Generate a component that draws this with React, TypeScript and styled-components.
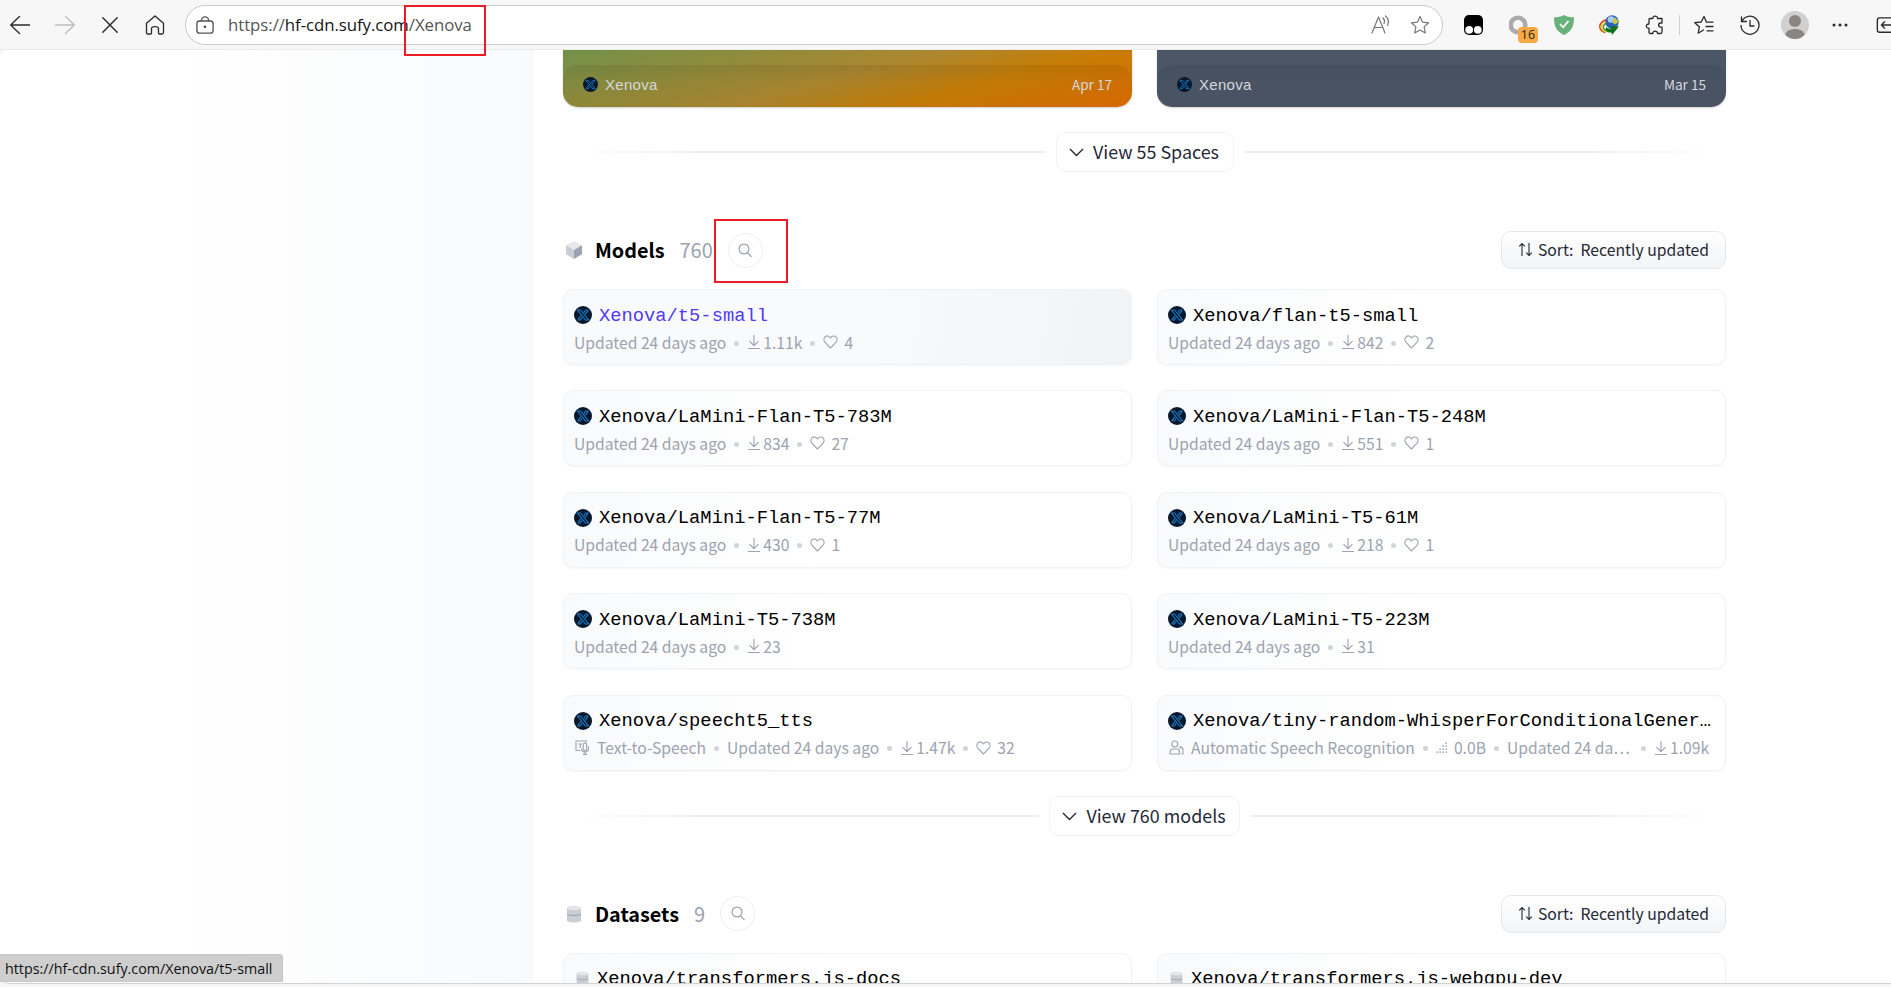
import React from 'react';
import styled, { createGlobalStyle } from 'styled-components';

const sans = '"Noto Sans CJK SC", "Noto Sans", sans-serif';
const mono = '"Liberation Mono", monospace';
const ui = '"Open Sans", "Noto Sans", sans-serif';

const Global = createGlobalStyle`
  * { box-sizing: border-box; }
  body { margin: 0; background: #f7f7f7; overflow: hidden; }
  svg { display: block; flex: none; }
`;

const Window = styled.div`
  position: relative;
  width: 1891px;
  height: 987px;
  overflow: hidden;
  display: flex;
  flex-direction: column;
  background: #f7f7f7;
  font-family: ${sans};
`;

const Toolbar = styled.header`
  height: 50px;
  flex: none;
  display: flex;
  align-items: center;
  padding-left: 8px;
  border-bottom: 1px solid #ebebeb;
`;

const Slot = styled.span<{ $w: number }>`
  width: ${p => p.$w}px;
  flex: none;
  height: 48px;
  display: flex;
  align-items: center;
  justify-content: center;
`;

const Address = styled.div`
  width: 1258px;
  height: 40px;
  flex: none;
  border: 1px solid #cbcbcb;
  border-radius: 20px;
  background: #fff;
  display: flex;
  align-items: center;
  padding: 0 5px 0 10px;
  font: 16.8px ${ui};
  color: #555;
  b { font-weight: 400; color: #151515; }
`;

const Url = styled.span`
  flex: 1;
  padding-left: 14px;
  letter-spacing: -0.05px;
  white-space: nowrap;
`;

const Divider = styled.span`
  width: 1px;
  height: 20px;
  margin: 0 9px;
  background: #cfcfcf;
  flex: none;
`;

const Viewport = styled.main`
  height: 933px;
  flex: none;
  display: flex;
  overflow: hidden;
  background: #fff;
  border-radius: 9px 0 0 9px;
  box-shadow: 0 1px 1px #cfcfcf;
`;

const Sidebar = styled.aside`
  width: 533px;
  flex: none;
  border-right: 1px solid #f5f6f8;
  background: linear-gradient(to right, #fff 30%, #f9fafc);
`;

const Content = styled.section`
  width: 1163px;
  margin-left: 30px;
  flex: none;
`;

const Grid = styled.div`
  display: grid;
  grid-template-columns: 569px 569px;
  gap: 25.4px 25px;
`;

const SpaceCard = styled.div<{ $bg: string }>`
  height: 57px;
  border-radius: 0 0 15px 15px;
  background: ${p => p.$bg};
  box-shadow: 0 1px 2px #0003;
  padding-top: 15px;
`;

const SpaceFooter = styled.div`
  height: 42px;
  border-radius: 15px;
  background: linear-gradient(#00000014, #00000008 40%);
  display: flex;
  align-items: center;
  padding: 0 20px 3px;
  color: #d5d8dc;
`;

const Owner = styled.span`
  flex: 1;
  margin-left: 7px;
  font: 15px "Liberation Sans", sans-serif;
  letter-spacing: 0.3px;
`;

const SpaceDate = styled.span`
  font-size: 13.6px;
  padding-bottom: 2px;
`;

const More = styled.div`
  display: flex;
  align-items: center;
  gap: 10px;
  height: 40px;
  padding: 0 15px;
`;

const Rule = styled.span<{ $dir: string }>`
  flex: 1;
  height: 2px;
  background: linear-gradient(to ${p => p.$dir}, #eeeff1 75%, #fff);
`;

const MoreButton = styled.button<{ $w: number }>`
  width: ${p => p.$w}px;
  height: 40px;
  border: 1px solid #f2f3f5;
  border-radius: 10px;
  background: #fff;
  display: flex;
  align-items: center;
  justify-content: center;
  gap: 9px;
  padding: 0 1px 2px 0;
  font: 17.9px ${sans};
  color: #1f2937;
  white-space: nowrap;
  svg { margin-top: 3px; }
`;

const Heading = styled.div`
  display: flex;
  align-items: center;
  height: 38px;
`;

const Title = styled.h3`
  margin: 0 0 0 12px;
  padding-bottom: 1px;
  font-size: 19.8px;
  font-weight: 600;
  color: #000;
`;

const Count = styled.span`
  margin-left: 15px;
  padding-bottom: 1px;
  font-size: 20px;
  color: #9ca3af;
`;

const SearchButton = styled.span`
  width: 35px;
  height: 35px;
  margin-left: 15px;
  border: 1px solid #eceef0;
  border-radius: 50%;
  display: grid;
  place-items: center;
`;

const SortButton = styled.button`
  width: 225px;
  height: 38px;
  margin-left: auto;
  border: 1px solid #e5e7eb;
  border-radius: 10px;
  background: linear-gradient(#fff, #f3f4f6);
  display: flex;
  align-items: center;
  justify-content: center;
  padding: 0 0 1px;
  font: 15.75px ${sans};
  color: #1f2937;
  white-space: nowrap;
  span { margin: 0 7px 0 5px; }
`;

const Card = styled.article<{ $hover?: boolean }>`
  height: 76px;
  border: 1px solid #f1f2f4;
  border-radius: 10px;
  box-shadow: 0 1px 2px #0000000a;
  background: ${p => p.$hover
    ? 'linear-gradient(100deg, #f9fafc 50%, #f2f3f5)'
    : 'linear-gradient(100deg, #f9fafc, #fff 45%)'};
  padding: 13px 0 0 10px;
`;

const Name = styled.h4<{ $hover?: boolean }>`
  display: flex;
  align-items: center;
  height: 25px;
  margin: 0;
  font: 18.77px ${mono};
  color: ${p => (p.$hover ? '#4f39f6' : '#000')};
  white-space: nowrap;
  svg { margin-bottom: 1px; }
`;

const NameText = styled.span`
  margin-left: 7px;
`;

const Meta = styled.div`
  display: flex;
  align-items: center;
  height: 22px;
  margin-top: 3px;
  font-size: 15.68px;
  color: #9ca3af;
  white-space: nowrap;
`;

const Dot = styled.i<{ $gap: number }>`
  width: 5px;
  height: 5px;
  border-radius: 50%;
  margin: 2px ${p => p.$gap}px 0;
  background: #d1d5db;
  flex: none;
`;

const Gap = styled.span<{ $w: number }>`
  width: ${p => p.$w}px;
  flex: none;
`;

const Spacer = styled.div<{ $h: number }>`
  height: ${p => p.$h}px;
`;

const Status = styled.div`
  position: absolute;
  left: 0;
  top: 954px;
  width: 283px;
  height: 28px;
  background: #cecece;
  border: 1px solid #c6c6c6;
  border-left: 0;
  border-radius: 0 4px 0 0;
  padding-left: 5px;
  font: 14.3px/28px ${ui};
  color: #111;
  white-space: nowrap;
`;

const Marker = styled.div<{ $x: number; $y: number; $w: number; $h: number }>`
  position: absolute;
  left: ${p => p.$x}px;
  top: ${p => p.$y}px;
  width: ${p => p.$w}px;
  height: ${p => p.$h}px;
  border: 2px solid #ed1c24;
`;

const Badge = styled.span`
  position: absolute;
  left: 13px;
  top: 26px;
  width: 20px;
  height: 16px;
  border-radius: 4px;
  background: #f7a944;
  font: 12.5px/16px ${ui};
  color: #222;
  text-align: center;
`;

const BadgeHost = styled(Slot)`
  position: relative;
`;

type IconProps = { size?: number; w?: number; color?: string; children: React.ReactNode };
const Icon = ({ size = 20, w = 1.3, color = '#2a2a2a', children }: IconProps) => (
  <svg width={size} height={size} viewBox="0 0 20 20" fill="none" stroke={color} strokeWidth={w} strokeLinecap="round" strokeLinejoin="round">
    {children}
  </svg>
);

const Avatar = ({ size = 18 }: { size?: number }) => (
  <svg width={size} height={size} viewBox="0 0 18 18">
    <circle cx="9" cy="9" r="9" fill="#06182e" />
    <g fill="none" stroke="#1a7cc2" strokeWidth="1.1">
      <path d="M3.500 4h3l8 10h-3z" />
      <path d="M14.500 4h-2.700L9.800 6.700M3.500 14h2.700l2-2.700M11 8.300l3-3.700M7 9.700l-3 3.700" />
    </g>
  </svg>
);

const Download = () => (
  <svg width="14" height="16" viewBox="0 0 14 16" fill="none" stroke="#9ca3af" strokeWidth="1.1">
    <path d="M7 1v10.500M2.500 7.200 7 11.700l4.500-4.500M1 14.500h12" />
  </svg>
);

const Heart = () => (
  <svg width="15" height="14" viewBox="0 0 15 14" fill="none" stroke="#9ca3af" strokeWidth="1.1">
    <path d="M7.500 13 1.900 7.100C.5 5.600.6 3.200 2 1.900c1.400-1.300 3.500-1.200 4.800.2l.7.8.7-.8C9.500.7 11.600.6 13 1.900c1.400 1.300 1.500 3.700.1 5.200z" />
  </svg>
);

const Chevron = () => (
  <svg width="15" height="9" viewBox="0 0 15 9" fill="none" stroke="#1f2937" strokeWidth="1.4">
    <path d="m1 1 6.500 6.500L14 1" />
  </svg>
);

const Speech = () => (
  <svg width="15" height="15" viewBox="0 0 15 15" fill="none" stroke="#9ca3af" strokeWidth="1.1">
    <path d="M5.500 10.500H1V1h10.500v1.200M3.300 4h4M5.300 4v4M8.300 4.800a1.700 1.700 0 0 1 3.400 0v4a1.700 1.700 0 0 1-3.400 0zM6.500 8.500c0 4.500 7 4.500 7 0V6.500M10 12v2.500M8 14.400h4" />
  </svg>
);

const Person = () => (
  <svg width="15" height="15" viewBox="0 0 15 15" fill="none" stroke="#9ca3af" strokeWidth="1.1">
    <circle cx="5.800" cy="4" r="3" />
    <path d="M1 14v-2c0-2 1-3 3-3h3.500c2 0 3 1 3 3v2zM11 6.500c2 .5 3 2.200 3 4V14h-1.500M11 6.500v2.500" />
  </svg>
);

const Params = () => (
  <svg width="12" height="12" viewBox="0 0 12 12" fill="#9ca3af">
    {[[10, 1], [10, 4], [10, 7], [10, 10], [7, 4], [7, 7], [7, 10], [4, 7], [4, 10], [1, 10]].map(([x, y]) => (
      <rect key={`${x}-${y}`} x={x - 0.6} y={y - 0.6} width="1.5" height="1.5" />
    ))}
  </svg>
);

const Cube = () => (
  <svg width="18" height="20" viewBox="0 0 18 19">
    <path d="m9 .5 8 4.300L9 9.500 1 4.800z" fill="#e5e7eb" />
    <path d="m1 4.800 8 4.700v9l-8-4.700z" fill="#c9cdd4" />
    <path d="m17 4.800-8 4.700v9l8-4.700z" fill="#9ca3af" />
  </svg>
);

const Database = ({ s = 18 }: { s?: number }) => (
  <svg width={s} height={s} viewBox="0 0 18 18">
    <path d="M2 3v12.500C2 18.300 16 18.300 16 15.500V3z" fill="#c9cdd4" />
    <ellipse cx="9" cy="2.800" rx="7" ry="2.300" fill="#e5e7eb" />
    <path d="M2 9.200c2 1.700 12 1.700 14 0" fill="none" stroke="#9ca3af" />
  </svg>
);

const Magnifier = () => (
  <svg width="14" height="15" viewBox="0 0 14 15" fill="none" stroke="#9ca3af" strokeWidth="1.2">
    <circle cx="6" cy="6" r="4.900" />
    <path d="m9.500 9.800 4 4" />
  </svg>
);

const SortIcon = () => (
  <svg width="15" height="15" viewBox="0 0 15 15" fill="none" stroke="#1f2937" strokeWidth="1.1">
    <path d="M4 14V1.500M1.200 4.300 4 1.500l2.800 2.800M11 1v12.500M8.200 10.700l2.800 2.800 2.800-2.800" />
  </svg>
);

type Model = { name: string; downloads: string; likes?: string; task?: 'tts' | 'asr' };
const models: Model[] = [
  { name: 't5-small', downloads: '1.11k', likes: '4' },
  { name: 'flan-t5-small', downloads: '842', likes: '2' },
  { name: 'LaMini-Flan-T5-783M', downloads: '834', likes: '27' },
  { name: 'LaMini-Flan-T5-248M', downloads: '551', likes: '1' },
  { name: 'LaMini-Flan-T5-77M', downloads: '430', likes: '1' },
  { name: 'LaMini-T5-61M', downloads: '218', likes: '1' },
  { name: 'LaMini-T5-738M', downloads: '23' },
  { name: 'LaMini-T5-223M', downloads: '31' },
  { name: 'speecht5_tts', downloads: '1.47k', likes: '32', task: 'tts' },
  { name: 'tiny-random-WhisperForConditionalGener…', downloads: '1.09k', task: 'asr' },
];

const ModelCard = ({ m, hover }: { m: Model; hover?: boolean }) => (
  <Card $hover={hover}>
    <Name $hover={hover}><Avatar /><NameText>Xenova/{m.name}</NameText></Name>
    <Meta>
      {m.task === 'tts' && <><Gap $w={1} /><Speech /><Gap $w={7} />Text-to-Speech<Dot $gap={8} /></>}
      {m.task === 'asr' && <><Gap $w={1} /><Person /><Gap $w={7} />Automatic Speech Recognition<Dot $gap={8} /><Params /><Gap $w={6} />0.0B<Dot $gap={8} /></>}
      {m.task === 'asr' ? 'Updated 24 da…' : 'Updated 24 days ago'}
      {m.task === 'asr' && <Gap $w={3} />}
      <Dot $gap={8} />
      <Download /><Gap $w={2} />{m.downloads}
      {m.likes && <><Dot $gap={8} /><Heart /><Gap $w={6} />{m.likes}</>}
    </Meta>
  </Card>
);

const SectionHeading = ({ icon, title, count }: { icon: React.ReactNode; title: string; count: string }) => (
  <Heading>
    <Gap $w={2} />{icon}
    <Title>{title}</Title>
    <Count>{count}</Count>
    <SearchButton><Magnifier /></SearchButton>
    <SortButton><SortIcon /><span>Sort:</span>Recently updated</SortButton>
  </Heading>
);

const ViewMore = ({ w, label }: { w: number; label: string }) => (
  <More>
    <Rule $dir="left" />
    <MoreButton $w={w}><Chevron />{label}</MoreButton>
    <Rule $dir="right" />
  </More>
);

const star = 'm10 1.500 2.500 5.600 6.100.7-4.500 4.100 1.200 6-5.300-3-5.300 3 1.200-6-4.500-4.100 6.100-.7z';

export default function App() {
  return (
    <Window>
      <Global />
      <Toolbar>
        <Slot $w={24}><Icon><path d="M19.500 10H.7M9.500 1.500.7 10l8.800 8.500" /></Icon></Slot>
        <Gap $w={21} />
        <Slot $w={24}><Icon color="#bdbdbd"><path d="M.5 10h18.800M10.500 1.500l8.800 8.500-8.800 8.500" /></Icon></Slot>
        <Gap $w={21} />
        <Slot $w={24}><Icon size={18} w={1.6}><path d="m2 2 16 16M18 2 2 18" /></Icon></Slot>
        <Gap $w={21} />
        <Slot $w={24}><Icon><path d="M1.500 8.300 10 1l8.500 7.300v9.200c0 1-.5 1.500-1.500 1.500h-2.500c-.7 0-1-.4-1-1v-4.500c0-2.600-7-2.600-7 0V18c0 .6-.3 1-1 1H3c-1 0-1.500-.5-1.500-1.500z" /></Icon></Slot>
        <Gap $w={18} />
        <Address>
          <Icon size={18} color="#555" w={1.5}><rect x="1" y="5.500" width="18" height="13.500" rx="3" /><path d="M6 5.500V5a4 4 0 0 1 8 0v.5" /><circle cx="10" cy="12" r=".8" fill="#555" /></Icon>
          <Url>https://<b>hf-cdn.sufy.com</b>/Xenova</Url>
          <Slot $w={34}><Icon size={20} color="#777" w={1.2}><path d="M1 18 7.500 2 14 18M3.300 12.500h8.400M12 3c1.500 1.500 1.800 3.500 1 5.500M14.500 1c3 2.500 3.500 6 2 9.500" /></Icon></Slot>
          <Gap $w={5} />
          <Slot $w={34}><Icon color="#777" w={1.2}><path d={star} /></Icon></Slot>
        </Address>
        <Gap $w={16} />
        <Slot $w={28}>
          <svg width="19" height="20" viewBox="0 0 19 20"><rect width="19" height="20" rx="5" fill="#000" /><circle cx="5.200" cy="14.800" r="3.900" fill="#fff" /><circle cx="13.800" cy="14.800" r="3.900" fill="#fff" /></svg>
        </Slot>
        <Gap $w={18} />
        <BadgeHost $w={28}>
          <svg width="20" height="20" viewBox="0 0 20 20"><circle cx="9" cy="10" r="7.300" fill="none" stroke="#ababab" strokeWidth="4.600" /></svg>
          <Badge>16</Badge>
        </BadgeHost>
        <Gap $w={17} />
        <Slot $w={28}>
          <svg width="20" height="20" viewBox="0 0 20 20"><path d="M10 0c3 2 6 2.200 10 2.200C20 11 18 16 10 20 2 16 0 11 0 2.200 4 2.200 7 2 10 0z" fill="#67b279" /><path d="m6 9 3.200 3.300L14.500 6" fill="none" stroke="#fff" strokeWidth="1.700" /></svg>
        </Slot>
        <Gap $w={17} />
        <Slot $w={28}>
          <svg width="20" height="20" viewBox="0 0 20 20">
            <path d="M11 5C5 3.500 0 8 1 13c1 2.500 2.500 4 5 4.500" fill="none" stroke="#d93b22" strokeWidth="1.500" />
            <path d="M10 6.500C5 6 1.500 9.500 2.500 13c1 2.500 3 3.500 5.500 4" fill="none" stroke="#f4cf25" strokeWidth="1.600" />
            <path d="M9.500 8C6 8 3.500 10.500 4.500 13c1 2.500 3 3 5.500 3.500" fill="none" stroke="#3da540" strokeWidth="1.600" />
            <circle cx="13" cy="7" r="6.700" fill="#2c62b8" /><circle cx="12" cy="4.500" r="3.300" fill="#a9cdf2" />
            <path d="M15.500 2.500c2 .5 3.500 2.500 3.500 5l-3 2-3-2.500z" fill="#c9c84c" />
            <path d="M7 12c2 2 4 2 5.500 1l-1-2 8.500.5L13 20l-.5-2.500C9 18 6 16.500 7 12z" fill="#12701a" />
          </svg>
        </Slot>
        <Gap $w={18} />
        <Slot $w={28}><Icon><path d="M5 3.500h2.800C7.500.2 12.800.2 12.500 3.500H17V8h-1c-3.200 0-3.200 4.200 0 4.200h1V17c0 1-.5 1.500-1.500 1.500h-3c.3-3.200-5-3.200-4.700 0H5.500C4.500 18.500 4 18 4 17v-3.800c-3.600.3-3.600-4.500 0-4.200V4.500c0-.6.400-1 1-1z" /></Icon></Slot>
        <Gap $w={1} />
        <Divider />
        <Gap $w={1} />
        <Slot $w={28}><Icon><path d="M13 7.200l-.5 0L10 1.500 7.200 7 .8 7.700l4.600 4.200-1.200 6.300 5.300-3.200M12.500 7.200H19M12 11.500h7M13 15.800h6" /></Icon></Slot>
        <Gap $w={18} />
        <Slot $w={28}><Icon><path d="M1.500 2v4.500h5M1.800 6.500A9 9 0 1 1 1 10.500M10 5.500V11h4" /></Icon></Slot>
        <Gap $w={17} />
        <Slot $w={28}>
          <svg width="28" height="28" viewBox="0 0 28 28"><clipPath id="user"><circle cx="14" cy="14" r="14" /></clipPath><g clipPath="url(#user)"><path d="M0 0h28v28H0z" fill="#d2d0ce" /><circle cx="14" cy="10" r="6" fill="#8a8580" /><path d="M4.500 24c0-8 19-8 19 0L19 28H9z" fill="#8a8580" /></g></svg>
        </Slot>
        <Gap $w={17} />
        <Slot $w={28}><svg width="16" height="4" viewBox="0 0 16 4" fill="#2a2a2a"><circle cx="2" cy="2" r="1.500" /><circle cx="8" cy="2" r="1.500" /><circle cx="14" cy="2" r="1.500" /></svg></Slot>
        <Gap $w={22} />
        <Icon size={18} w={1.5}><path d="M19 2H4C2.500 2 1.500 3 1.500 4.500v11C1.500 17 2.500 18 4 18h15M17 10H6M9.500 6.500 6 10l3.500 3.500" /></Icon>
      </Toolbar>
      <Viewport>
        <Sidebar />
        <Content>
          <Grid>
            <SpaceCard $bg="linear-gradient(165deg, #71914a 0%, #ab8730 48%, #c77d05 70%, #dd6b00 100%)">
              <SpaceFooter><Avatar size={15} /><Owner>Xenova</Owner><SpaceDate>Apr 17</SpaceDate></SpaceFooter>
            </SpaceCard>
            <SpaceCard $bg="#4b5666">
              <SpaceFooter><Avatar size={15} /><Owner>Xenova</Owner><SpaceDate>Mar 15</SpaceDate></SpaceFooter>
            </SpaceCard>
          </Grid>
          <Spacer $h={25} />
          <ViewMore w={178} label="View 55 Spaces" />
          <Spacer $h={59} />
          <SectionHeading icon={<Cube />} title="Models" count="760" />
          <Spacer $h={20} />
          <Grid>
            {models.map((m, i) => <ModelCard key={m.name} m={m} hover={i === 0} />)}
          </Grid>
          <Spacer $h={25.4} />
          <ViewMore w={191} label="View 760 models" />
          <Spacer $h={59} />
          <SectionHeading icon={<Database />} title="Datasets" count="9" />
          <Spacer $h={20} />
          <Grid>
            <Card><Name><Gap $w={1} /><Database s={15} /><NameText>Xenova/transformers.js-docs</NameText></Name></Card>
            <Card><Name><Gap $w={1} /><Database s={15} /><NameText>Xenova/transformers.js-webgpu-dev</NameText></Name></Card>
          </Grid>
        </Content>
      </Viewport>
      <Status>https://hf-cdn.sufy.com/Xenova/t5-small</Status>
      <Marker $x={404} $y={5} $w={82} $h={51} />
      <Marker $x={714} $y={219} $w={74} $h={64} />
    </Window>
  );
}
